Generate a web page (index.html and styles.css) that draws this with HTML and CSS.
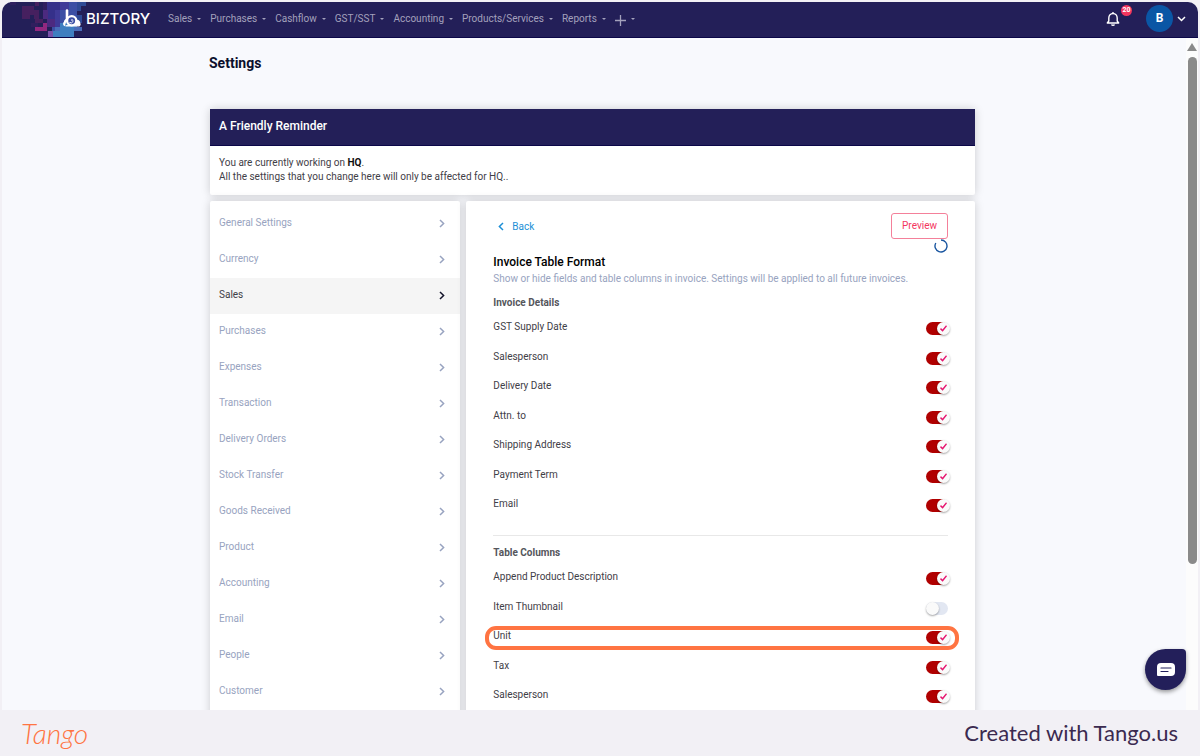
FILE: index.html
```html
<!DOCTYPE html>
<html lang="en">
<head>
<meta charset="utf-8">
<title>Biztory – Settings</title>
<meta name="viewport" content="width=device-width, initial-scale=1">
<link rel="stylesheet" href="styles.css">
</head>
<body>
<svg class="sprite" aria-hidden="true">
  <symbol id="chevron" viewBox="0 0 6 9"><path d="M1 1l3.600 3.500L1 8" fill="none" stroke="currentColor" stroke-width="1.500"/></symbol>
</svg>
<div class="window">
  <header class="topbar">
    <svg class="mosaic" viewBox="0 0 86 35" aria-hidden="true">
      <path fill="#2f1f5e" d="M8 0h6v3H8zM41 0h8v16h-8zM29 21h7v4h-7z"/>
      <path fill="#46205f" d="M20 4h12v4h5v9h-5v-4h-4v4h-8zM33 0h4v4h-4zM33 17h8v4h-8z"/>
      <path fill="#35308a" d="M45 0h13v17H45z"/>
      <path fill="#4c2a80" d="M41 8h5v9h-5zM45 17h8v8h-8z"/>
      <path fill="#3f3a98" d="M53 8h8v17h-8zM58 0h9v8h-9z"/>
      <path fill="#3b4fa4" d="M58 8h17v17H58zM67 0h8v8h-8zM50 25h5v4h-5z"/>
      <path fill="#2e4a95" d="M75 0h9v4h-5v5h-4zM75 13h5v8h-5z"/>
      <path fill="#92287f" d="M33 25h12v4H33zM41 21h4v4h-4z"/>
      <path fill="#7851a9" d="M46 29h5v6h-5z"/>
      <path fill="#3f7fc0" d="M51 29h21v6H51zM58 21h17v8H58z"/>
      <path fill="#4a6db8" d="M53 25h5v4h-5zM72 25h8v4h-8z"/>
    </svg>
    <a class="brand" href="#">
      <svg width="18" height="19" viewBox="0 0 18 19" aria-hidden="true">
        <path d="M2 16.600 a1.800 1.800 0 0 1-.5-3.200 A2.700 2.700 0 0 1 4 10.500 M14 11.500 a2.500 2.500 0 0 1 2.600 3 1.400 1.400 0 0 1-.9 2.300H2.500" fill="#fff" stroke="#fff" stroke-width="1.300"/>
        <path d="M4 1.500v10.500" stroke="#fff" stroke-width="2.600" stroke-linecap="round"/>
        <circle cx="8.700" cy="11.800" r="4.600" fill="#3b4fa4" stroke="#fff" stroke-width="2.300"/>
        <path d="M6.500 13.500q2 1.500 4-1.500M8 11h2" fill="none" stroke="#fff" stroke-width="1"/>
      </svg>
      <span>BIZTORY</span>
    </a>
    <nav class="nav">
      <a href="#">Sales</a><a href="#">Purchases</a><a href="#">Cashflow</a><a href="#">GST/SST</a><a href="#">Accounting</a><a href="#">Products/Services</a><a href="#">Reports</a>
      <a href="#" aria-label="Add"><svg class="plus" width="11" height="11" viewBox="0 0 11 11" aria-hidden="true"><path d="M5.500 0v11M0 5.500h11" stroke="currentColor" stroke-width="1.300"/></svg></a>
    </nav>
    <div class="tools">
      <button class="bell" aria-label="Notifications">
        <svg width="14" height="16" viewBox="0 0 14 16" aria-hidden="true"><path d="M7 1v1.500M2.800 10V7a4.200 4.500 0 0 1 8.400 0v3l1.500 2H1.300zM5.500 13.500a1.600 1.200 0 0 0 3 0" fill="none" stroke="#fff" stroke-width="1.400" stroke-linejoin="round"/></svg>
        <span class="badge">20</span>
      </button>
      <button class="account" aria-label="Account menu">
        <span class="avatar">B</span>
        <svg width="9" height="6" viewBox="0 0 9 6" aria-hidden="true"><path d="M1 1l3.500 3.500L8 1" fill="none" stroke="#fff" stroke-width="1.500"/></svg>
      </button>
    </div>
  </header>

  <div class="body">
    <main class="page">
      <h1>Settings</h1>
      <section class="card reminder">
        <h2>A Friendly Reminder</h2>
        <p>You are currently working on <b>HQ</b>.<br>All the settings that you change here will only be affected for HQ..</p>
      </section>
      <div class="columns">
        <nav class="card menu" aria-label="Settings sections">
          <a href="#">General Settings<svg><use href="#chevron"/></svg></a>
          <a href="#">Currency<svg><use href="#chevron"/></svg></a>
          <a href="#" class="active" aria-current="page">Sales<svg><use href="#chevron"/></svg></a>
          <a href="#">Purchases<svg><use href="#chevron"/></svg></a>
          <a href="#">Expenses<svg><use href="#chevron"/></svg></a>
          <a href="#">Transaction<svg><use href="#chevron"/></svg></a>
          <a href="#">Delivery Orders<svg><use href="#chevron"/></svg></a>
          <a href="#">Stock Transfer<svg><use href="#chevron"/></svg></a>
          <a href="#">Goods Received<svg><use href="#chevron"/></svg></a>
          <a href="#">Product<svg><use href="#chevron"/></svg></a>
          <a href="#">Accounting<svg><use href="#chevron"/></svg></a>
          <a href="#">Email<svg><use href="#chevron"/></svg></a>
          <a href="#">People<svg><use href="#chevron"/></svg></a>
          <a href="#">Customer<svg><use href="#chevron"/></svg></a>
        </nav>
        <section class="card format">
          <div class="actions">
            <a class="back" href="#"><svg width="6" height="9"><use href="#chevron"/></svg>Back</a>
            <div class="side">
              <button class="preview">Preview</button>
              <svg class="spinner" width="14" height="14" viewBox="0 0 14 14" aria-hidden="true"><path d="M7 1a6 6 0 1 1-5.200 3" fill="none" stroke="#1a56a0" stroke-width="1.400"/></svg>
            </div>
          </div>
          <h2>Invoice Table Format</h2>
          <p class="hint">Show or hide fields and table columns in invoice. Settings will be applied to all future invoices.</p>
          <h3>Invoice Details</h3>
          <div class="rows">
            <label>GST Supply Date<input type="checkbox" checked></label>
            <label>Salesperson<input type="checkbox" checked></label>
            <label>Delivery Date<input type="checkbox" checked></label>
            <label>Attn. to<input type="checkbox" checked></label>
            <label>Shipping Address<input type="checkbox" checked></label>
            <label>Payment Term<input type="checkbox" checked></label>
            <label>Email<input type="checkbox" checked></label>
          </div>
          <hr>
          <h3>Table Columns</h3>
          <div class="rows">
            <label>Append Product Description<input type="checkbox" checked></label>
            <label>Item Thumbnail<input type="checkbox"></label>
            <label class="highlight">Unit<input type="checkbox" checked></label>
            <label>Tax<input type="checkbox" checked></label>
            <label>Salesperson<input type="checkbox" checked></label>
          </div>
        </section>
      </div>
    </main>
    <div class="scrollbar" aria-hidden="true"><i class="arrow"></i><i class="thumb"></i></div>
    <button class="chat" aria-label="Open chat">
      <svg width="18" height="14" viewBox="0 0 18 14" aria-hidden="true"><path d="M4 0h10a4 4 0 0 1 4 4v5a4 4 0 0 1-4 4H1a1 1 0 0 1-1-1V4a4 4 0 0 1 4-4z" fill="#fff"/><path d="M4 5h10M4 8.500h7" stroke="#23205e" stroke-width="1.200" stroke-linecap="round"/></svg>
    </button>
  </div>
</div>
<footer class="footer">
  <span class="tango">Tango</span>
  <span>Created with Tango.us</span>
</footer>
</body>
</html>
```
FILE: styles.css
```css
* { box-sizing: border-box; }

body {
  margin: 0;
  height: 100vh;
  display: flex;
  flex-direction: column;
  overflow: hidden;
  background: #f2f0f5;
  font: 10px/14px Roboto, sans-serif;
  color: #3f4047;
}

h1, h2, h3, p { margin: 0; }
a { color: inherit; text-decoration: none; }
button { border: 0; padding: 0; background: none; font: inherit; color: inherit; cursor: pointer; }
.sprite { position: absolute; width: 0; height: 0; }

.window {
  flex: 1;
  min-height: 0;
  margin: 2px 2px 0;
  display: flex;
  flex-direction: column;
  border-radius: 10px 10px 0 0;
  overflow: hidden;
  background: #f8f9fd;
}

/* Top bar */
.topbar {
  position: relative;
  flex: none;
  height: 36px;
  display: flex;
  align-items: center;
  padding: 0 12px 2px 0;
  background: #231f58;
  border-bottom: 1px solid #0b0748;
  color: #a3a1bc;
}
.mosaic { position: absolute; left: 0; top: 0; width: 86px; height: 35px; }
.brand {
  position: relative;
  width: 166px;
  padding-left: 61px;
  display: flex;
  align-items: center;
  gap: 5px;
  font: 500 15px/18px Inter, sans-serif;
  color: #fff;
}
.nav { display: flex; align-items: center; gap: 9px; }
.nav a { display: flex; align-items: center; gap: 5px; }
.nav a::after {
  content: "";
  border: 2px solid transparent;
  border-top-color: currentColor;
  border-bottom: 0;
}
.plus { margin-top: 3px; }
.tools { margin-left: auto; display: flex; align-items: center; gap: 26px; }
.bell { position: relative; display: flex; }
.badge {
  position: absolute;
  left: 15px;
  top: -6px;
  width: 11px;
  border-radius: 6px;
  background: #f3365f;
  color: #fff;
  font-size: 7px;
  font-weight: 700;
  line-height: 11px;
}
.account { display: flex; align-items: center; gap: 4px; }
.avatar {
  width: 27px;
  border-radius: 50%;
  background: #0a56a5;
  color: #fff;
  font-size: 12px;
  font-weight: 700;
  line-height: 27px;
}

/* Page */
.body { position: relative; flex: 1; min-height: 0; display: flex; overflow: hidden; }
.page { flex: 1; padding: 15px 211px 0 207px; }
h1 { font-size: 14px; line-height: 20px; font-weight: 700; color: #0a0f2c; margin-bottom: 36px; }
.card { background: #fff; border-radius: 2px; box-shadow: 0 0 10px #0000002e; }
.reminder { margin: 0 0 6px 1px; }
.reminder h2 {
  padding: 8px 9px 10px;
  background: #231f58;
  border-bottom: 1px solid #0b0748;
  color: #fff;
  font-size: 12px;
  line-height: 18px;
  font-weight: 500;
}
.reminder p { padding: 10px 9px 11px; }
.reminder b { color: #111; }
.columns { display: grid; grid-template-columns: 250fr 508fr; gap: 6px; margin-left: 1px; }

/* Section menu */
.menu { padding-top: 5px; color: #98a3c0; }
.menu a {
  display: flex;
  align-items: center;
  justify-content: space-between;
  height: 36px;
  padding: 0 15px 2px 9px;
}
.menu svg { width: 6px; height: 9px; margin-top: 1px; }
.menu .active { background: #f5f5f5; color: #3f4047; }
.menu .active svg { color: #14142b; }

/* Invoice table format */
.format { padding: 12px 27px 40px 27px; }
.actions { display: flex; justify-content: space-between; height: 41px; }
.back { display: flex; align-items: center; gap: 8px; height: 27px; padding-left: 5px; color: #1d8fd6; }
.back svg { transform: scaleX(-1); }
.side { display: flex; flex-direction: column; align-items: flex-end; }
.preview {
  height: 26px;
  padding: 0 10px;
  border: 1px solid #f4809a;
  border-radius: 3px;
  color: #f3365f;
}
.format h2 { font-size: 12px; line-height: 17px; font-weight: 500; color: #000; }
.hint { line-height: 16px; color: #98a3c0; }
h3 { margin-top: 9px; font-size: 10px; line-height: 14px; font-weight: 700; color: #55565c; }
.rows { padding-top: 10px; }
.rows label { position: relative; display: flex; justify-content: space-between; height: 29px; }
.rows label:nth-child(odd) { height: 30px; }
.rows input {
  appearance: none;
  position: relative;
  width: 22px;
  height: 13px;
  margin: 2px 0 0;
  border-radius: 7px;
  background: #e2e7f2;
}
.rows input:checked { background: #b00000; }
.rows input::before {
  content: "";
  position: absolute;
  left: 0;
  top: 0;
  width: 13px;
  height: 13px;
  border-radius: 50%;
  background: #fafafa;
  box-shadow: 0 1px 2px #00000059;
}
.rows input:checked::before { left: 11px; }
.rows input:checked::after {
  content: "";
  position: absolute;
  left: 14px;
  top: 3px;
  width: 7px;
  height: 7px;
  background: #e6156f;
  clip-path: polygon(0 60%, 14% 44%, 36% 66%, 86% 4%, 100% 18%, 38% 98%);
}
.highlight::after {
  content: "";
  position: absolute;
  inset: -3px -11px 9px -8px;
  border: 4px solid #ff7442;
  border-radius: 11px;
}
hr { margin: 8px 0 0; border: 0; border-top: 1px solid #e8e8e8; }
hr + h3 { margin-top: 10px; }

.scrollbar {
  width: 12px;
  display: flex;
  flex-direction: column;
  align-items: center;
  gap: 6px;
  padding-top: 5px;
  background: #fcfcfc;
}
.arrow { border: 5px solid transparent; border-top: 0; border-bottom: 8px solid #8a8a8a; }
.thumb { width: 9px; height: 76%; border-radius: 5px; background: #8a8a8a; }
.chat {
  position: absolute;
  right: 12px;
  bottom: 20px;
  width: 41px;
  height: 41px;
  display: grid;
  place-items: center;
  border-radius: 50% 4px 50% 50%;
  background: #231f5a;
  box-shadow: 0 2px 4px #00000066;
}

.footer {
  flex: none;
  height: 46px;
  display: flex;
  align-items: center;
  justify-content: space-between;
  padding: 0 22px 0 21px;
  font: 22px/28px Lato, sans-serif;
  color: #3b2a50;
}
.tango { color: #ff7442; font-size: 28px; font-style: italic; font-weight: 300; }
```
